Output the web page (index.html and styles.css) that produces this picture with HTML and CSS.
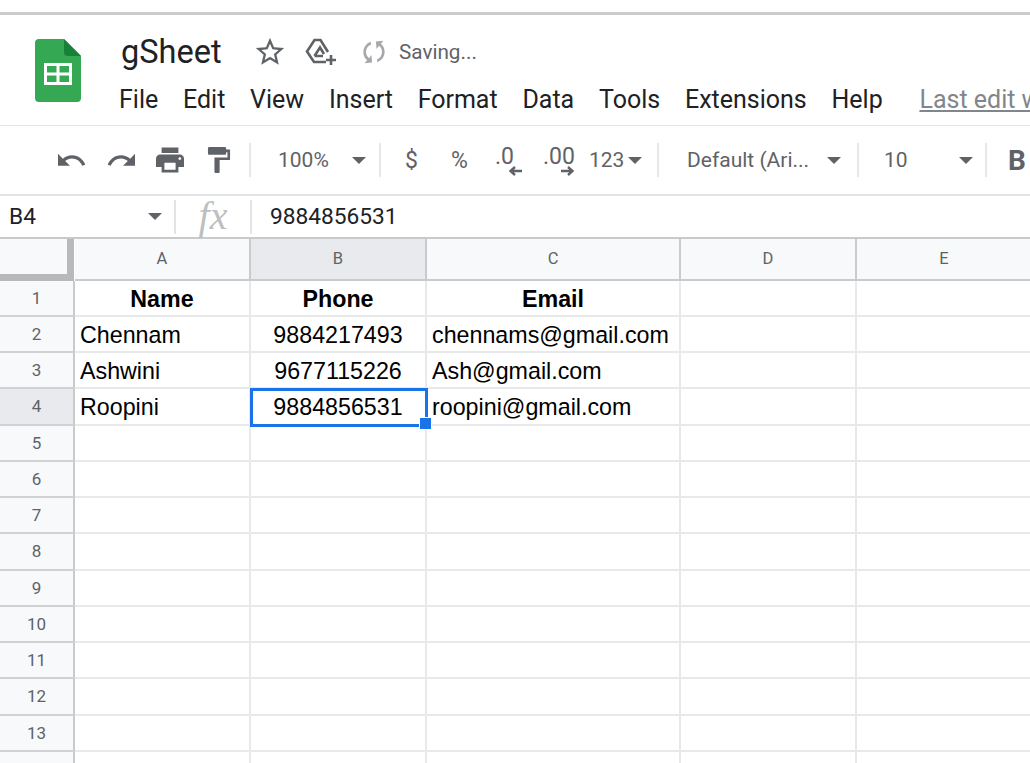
FILE: index.html
```html
<!DOCTYPE html>
<html>

<head>
	<meta charset="utf-8">
	<title>gSheet</title>
	<link rel="stylesheet" href="styles.css">
</head>

<body>
	<!-- Title and menu -->
	<div class="header">
		<svg class="logo" viewBox="0 0 46 63">
			<path fill="#34a853" d="M4 0H29L46 17V59a4 4 0 0 1-4 4H4a4 4 0 0 1-4-4V4a4 4 0 0 1 4-4z" />
			<path fill="#188038" d="M29 0L46 17H33a4 4 0 0 1-4-4z" />
			<path fill="#fff" d="M9 24H37V46H9zM12 27V33.500H21.500V27zM24.500 27V33.500H34V27zM12 36.500V43H21.500V36.500zM24.500 36.500V43H34V36.500z" fill-rule="evenodd" />
		</svg>
		<div class="header_right">
			<div class="title_row">
				<span class="doc_title">gSheet</span>
				<svg class="star" viewBox="0 0 24 24">
					<path d="M22 9.240l-7.190-.620L12 2 9.190 8.630 2 9.240l5.460 4.730L5.820 21 12 17.270 18.180 21l-1.630-7.030L22 9.240zM12 15.400l-3.760 2.270 1-4.280-3.320-2.880 4.380-.380L12 6.100l1.710 4.040 4.380.380-3.320 2.880 1 4.280L12 15.400z" />
				</svg>
				<svg class="drive" viewBox="0 0 32 28">
					<path d="M21 24H9L2 13.500 9.500 2H15.500L23 14" />
					<path d="M9.500 18L15 9.500 19 16M9.500 18H18" />
					<path d="M26 17V27M21 22H31" />
				</svg>
				<svg class="sync" viewBox="0 0 24 24">
					<path d="M12 4V1L8 5l4 4V6c3.310 0 6 2.690 6 6 0 1.010-.250 1.970-.700 2.800l1.460 1.460C19.540 15.030 20 13.570 20 12c0-4.420-3.580-8-8-8zm0 14c-3.310 0-6-2.690-6-6 0-1.010.250-1.970.700-2.800L5.240 7.740C4.460 8.970 4 10.430 4 12c0 4.420 3.580 8 8 8v3l4-4-4-4v3z" />
				</svg>
				<span class="saving">Saving...</span>
			</div>
			<div class="menu_row">
				<span>File</span>
				<span>Edit</span>
				<span>View</span>
				<span>Insert</span>
				<span>Format</span>
				<span>Data</span>
				<span>Tools</span>
				<span>Extensions</span>
				<span>Help</span>
				<span class="last_edit">Last edit was seconds ago</span>
			</div>
		</div>
	</div>

	<!-- Toolbar -->
	<div class="toolbar">
		<div class="tool_group history">
			<svg class="tool_icon" viewBox="2 6 21 12"><path d="M12.500 8c-2.650 0-5.050.990-6.900 2.600L2 7v9h9l-3.620-3.620c1.390-1.160 3.160-1.880 5.120-1.880 3.540 0 6.550 2.310 7.600 5.500l2.370-.780C21.080 11.030 17.150 8 12.500 8z" /></svg>
			<svg class="tool_icon" viewBox="1 6 21 12"><path d="M18.400 10.600C16.550 8.990 14.150 8 11.500 8c-4.650 0-8.580 3.030-9.960 7.220L3.900 16c1.050-3.190 4.050-5.500 7.600-5.500 1.950 0 3.730.720 5.120 1.880L13 16h9V7l-3.600 3.600z" /></svg>
			<svg class="tool_icon tall" viewBox="2 3 20 18"><path d="M19 8H5c-1.660 0-3 1.340-3 3v6h4v4h12v-4h4v-6c0-1.660-1.340-3-3-3zm-3 11H8v-5h8v5zm3-7c-.550 0-1-.450-1-1s.450-1 1-1 1 .450 1 1-.450 1-1 1zm-1-9H6v4h12V3z" /></svg>
			<svg class="tool_icon tall" viewBox="4 2 17 20"><path d="M18 4V3c0-.550-.450-1-1-1H5c-.550 0-1 .450-1 1v4c0 .550.450 1 1 1h12c.550 0 1-.450 1-1V6h1v4H9v11c0 .550.450 1 1 1h2c.550 0 1-.450 1-1v-9h8V4h-3z" /></svg>
		</div>
		<div class="sep sep_zoom"></div>
		<div class="tool_select zoom_select"><span>100%</span><i class="caret"></i></div>
		<div class="sep"></div>
		<div class="tool_group number">
			<span class="dollar">$</span>
			<span class="percent">%</span>
			<span class="decimal less">.0
				<svg viewBox="0 0 14 10"><path d="M14 5H3M7 1L2.500 5 7 9" /></svg>
			</span>
			<span class="decimal more">.00
				<svg viewBox="0 0 14 10"><path d="M0 5H11M7 1L11.500 5 7 9" /></svg>
			</span>
			<span class="more_formats">123<i class="caret"></i></span>
		</div>
		<div class="sep"></div>
		<div class="tool_select font_select"><span>Default (Ari...</span><i class="caret"></i></div>
		<div class="sep"></div>
		<div class="tool_select size_select"><span>10</span><i class="caret"></i></div>
		<div class="sep"></div>
		<span class="bold_btn">B</span>
	</div>

	<!-- Formula bar -->
	<div class="formula_bar">
		<div class="name_box"><span>B4</span><i class="caret"></i></div>
		<div class="fx_box"><span>fx</span></div>
		<div class="formula_value">9884856531</div>
	</div>

	<!-- Grid -->
	<div class="grid">
		<div class="col_head corner"></div>
		<div class="col_head">A</div>
		<div class="col_head active">B</div>
		<div class="col_head">C</div>
		<div class="col_head">D</div>
		<div class="col_head">E</div>

		<div class="row_head">1</div>
		<div class="cell center strong">Name</div>
		<div class="cell center strong">Phone</div>
		<div class="cell center strong">Email</div>
		<div class="cell"></div>
		<div class="cell"></div>

		<div class="row_head">2</div>
		<div class="cell">Chennam</div>
		<div class="cell center">9884217493</div>
		<div class="cell">chennams@gmail.com</div>
		<div class="cell"></div>
		<div class="cell"></div>

		<div class="row_head">3</div>
		<div class="cell">Ashwini</div>
		<div class="cell center">9677115226</div>
		<div class="cell">Ash@gmail.com</div>
		<div class="cell"></div>
		<div class="cell"></div>

		<div class="row_head active">4</div>
		<div class="cell">Roopini</div>
		<div class="cell center selected">9884856531<i class="fill_handle"></i></div>
		<div class="cell">roopini@gmail.com</div>
		<div class="cell"></div>
		<div class="cell"></div>

		<div class="row_head">5</div>
		<div class="cell"></div><div class="cell"></div><div class="cell"></div><div class="cell"></div><div class="cell"></div>
		<div class="row_head">6</div>
		<div class="cell"></div><div class="cell"></div><div class="cell"></div><div class="cell"></div><div class="cell"></div>
		<div class="row_head">7</div>
		<div class="cell"></div><div class="cell"></div><div class="cell"></div><div class="cell"></div><div class="cell"></div>
		<div class="row_head">8</div>
		<div class="cell"></div><div class="cell"></div><div class="cell"></div><div class="cell"></div><div class="cell"></div>
		<div class="row_head">9</div>
		<div class="cell"></div><div class="cell"></div><div class="cell"></div><div class="cell"></div><div class="cell"></div>
		<div class="row_head">10</div>
		<div class="cell"></div><div class="cell"></div><div class="cell"></div><div class="cell"></div><div class="cell"></div>
		<div class="row_head">11</div>
		<div class="cell"></div><div class="cell"></div><div class="cell"></div><div class="cell"></div><div class="cell"></div>
		<div class="row_head">12</div>
		<div class="cell"></div><div class="cell"></div><div class="cell"></div><div class="cell"></div><div class="cell"></div>
		<div class="row_head">13</div>
		<div class="cell"></div><div class="cell"></div><div class="cell"></div><div class="cell"></div><div class="cell"></div>
		<div class="row_head">14</div>
		<div class="cell"></div><div class="cell"></div><div class="cell"></div><div class="cell"></div><div class="cell"></div>
	</div>
</body>

</html>
```
FILE: styles.css
```css
html,
body {
	height: 100%;
	overflow: hidden;
}

body {
	margin: 0;
	padding-top: 12px;
	box-sizing: border-box;
	background-color: #fff;
	color: #202124;
	font-family: Roboto, sans-serif;
}

svg {
	display: block;
	flex: none;
}

/* header */
.header {
	display: flex;
	height: 114px;
	box-sizing: border-box;
	border-top: 3px solid #cbcbcb;
	border-bottom: 1px solid #e3e4e8;
	padding-left: 35px;
}

.logo {
	width: 46px;
	height: 63px;
	margin-top: 24px;
}

.header_right {
	margin-left: 38px;
	white-space: nowrap;
}

.title_row {
	display: flex;
	align-items: center;
	height: 44px;
	margin-top: 15px;
	margin-left: 2px;
}

.doc_title {
	font-size: 32.500px;
	width: 132px;
}

.star {
	width: 34px;
	height: 34px;
	fill: #5f6368;
}

.drive {
	width: 32px;
	height: 28px;
	margin-left: 18px;
	fill: none;
	stroke: #5f6368;
	stroke-width: 2.6;
}

.sync {
	width: 32px;
	height: 32px;
	margin-left: 21px;
	fill: #a6a8ab;
	transform: rotate(40deg);
}

.saving {
	margin-left: 9px;
	font-size: 20.700px;
	color: #5f6368;
}

.menu_row {
	display: flex;
	gap: 24.750px;
	font-size: 25px;
	line-height: 30px;
	margin-top: 11px;
}

.last_edit {
	margin-left: 12px;
	color: #80868b;
	text-decoration: underline;
}

/* toolbar */
.toolbar {
	display: flex;
	align-items: center;
	height: 70px;
	box-sizing: border-box;
	border-bottom: 2px solid #e3e4e8;
	padding-left: 58px;
	white-space: nowrap;
	color: #5f6368;
	font-size: 21px;
}

.tool_group {
	display: flex;
	align-items: center;
}

.tool_icon {
	width: 28px;
	height: 17px;
	fill: #5f6368;
}

.tool_icon.tall {
	height: 26px;
}

.history {
	gap: 21px;
}

.sep {
	width: 2px;
	height: 34px;
	background-color: #e6e7e8;
	flex: none;
}

.sep_zoom {
	margin-left: 16px;
}

.tool_select {
	display: flex;
	align-items: center;
	justify-content: space-between;
	box-sizing: border-box;
	flex: none;
}

.caret {
	display: block;
	flex: none;
	width: 0;
	height: 0;
	border-left: 7px solid transparent;
	border-right: 7px solid transparent;
	border-top: 7px solid #5f6368;
}

.zoom_select {
	width: 128px;
	padding: 0 13px 0 27px;
}

.font_select {
	width: 198px;
	padding: 0 16px 0 28px;
}

.size_select {
	width: 126px;
	padding: 0 12px 0 25px;
}

.number {
	width: 276px;
	box-sizing: border-box;
	padding-left: 24px;
}

.dollar {
	width: 46px;
	font-size: 23px;
}

.percent {
	width: 44px;
	font-size: 23px;
}

.decimal {
	display: flex;
	flex-direction: column;
	height: 34px;
	line-height: 28px;
	font-size: 23px;
}

.decimal svg {
	width: 14px;
	height: 10px;
	margin-top: -5px;
	align-self: flex-end;
	fill: none;
	stroke: #5f6368;
	stroke-width: 2.4;
}

.less {
	width: 48px;
}

.less svg {
	align-self: flex-start;
	margin-left: 13px;
}

.more {
	width: 46px;
}

.more svg {
	align-self: flex-start;
	margin-left: 18px;
}

.more_formats {
	display: flex;
	align-items: center;
	gap: 4px;
}

.bold_btn {
	margin-left: 21px;
	font-size: 28px;
	font-weight: 700;
}

/* formula bar */
.formula_bar {
	display: flex;
	align-items: center;
	height: 43px;
	box-sizing: border-box;
	border-bottom: 2px solid #c9cacb;
	font-size: 22.700px;
}

.name_box {
	display: flex;
	align-items: center;
	justify-content: space-between;
	width: 176px;
	height: 34px;
	box-sizing: border-box;
	padding: 0 12px 0 9px;
	border-right: 2px solid #e3e4e6;
}

.fx_box {
	width: 76px;
	height: 34px;
	box-sizing: border-box;
	border-right: 2px solid #e3e4e6;
	text-align: center;
	font-family: "Liberation Serif", serif;
	font-style: italic;
	font-size: 40px;
	line-height: 32px;
	color: #bdbfc1;
}

.formula_value {
	padding-left: 18px;
}

/* grid */
.grid {
	display: grid;
	grid-template-columns: 75px 176px 176px 254px 176px 176px;
	grid-template-rows: 41.500px;
	grid-auto-rows: 36.250px;
}

.col_head {
	display: flex;
	align-items: center;
	justify-content: center;
	box-sizing: border-box;
	background-color: #f8f9fa;
	border-right: 2px solid #c9cacb;
	border-bottom: 2px solid #c9cacb;
	color: #5f6368;
	font-size: 16.500px;
}

.col_head.active,
.row_head.active {
	background-color: #e8eaed;
}

.corner {
	border-right: 7px solid #b9b9b9;
	border-bottom: 7px solid #b9b9b9;
	margin-right: 1px;
}

.row_head {
	display: flex;
	align-items: center;
	justify-content: center;
	box-sizing: border-box;
	background-color: #f8f9fa;
	border-right: 2px solid #c9cacb;
	border-bottom: 2px solid #d0d1d2;
	color: #5f6368;
	font-size: 17px;
}

.cell {
	position: relative;
	box-sizing: border-box;
	border-right: 2px solid #e8e9ea;
	border-bottom: 2px solid #e8e9ea;
	padding-left: 5px;
	font-family: "Liberation Sans", sans-serif;
	font-size: 23.250px;
	line-height: 36px;
	color: #000;
	white-space: nowrap;
}

.center {
	text-align: center;
	padding-left: 0;
}

.strong {
	font-weight: 700;
}

.selected {
	outline: 3px solid #1a73e8;
	outline-offset: -2px;
	z-index: 1;
}

/* little square on the corner of the selected cell */
.fill_handle {
	position: absolute;
	right: -7px;
	bottom: -6px;
	width: 11px;
	height: 11px;
	background-color: #1a73e8;
	border: 1px solid #fff;
}
```
